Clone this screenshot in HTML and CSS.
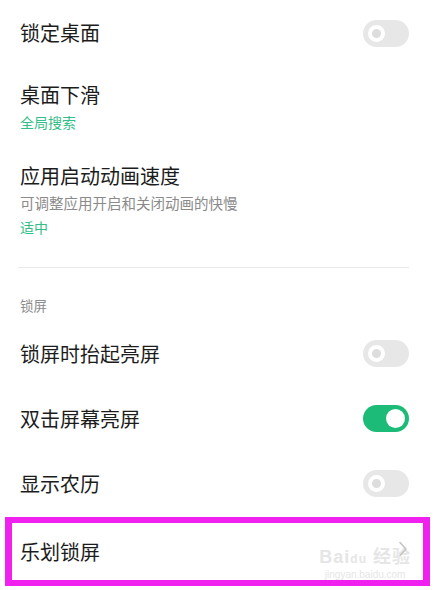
FILE: index.html
```html
<!DOCTYPE html>
<html>
<head>
<meta http-equiv="Content-Type" content="text/html; charset=utf-8"/>
<title>桌面与锁屏设置</title>
<link rel="stylesheet" href="styles.css">
</head>
<body>
<div class="list">

  <div class="item">
    <div class="title">锁定桌面</div>
    <span class="switch"></span>
  </div>

  <div class="item item-multi first-multi">
    <div class="text">
      <div class="title">桌面下滑</div>
      <div class="value">全局搜索</div>
    </div>
  </div>

  <div class="item item-multi">
    <div class="text">
      <div class="title">应用启动动画速度</div>
      <div class="desc">可调整应用开启和关闭动画的快慢</div>
      <div class="value">适中</div>
    </div>
  </div>

  <div class="divider"></div>

  <div class="section">锁屏</div>

  <div class="item">
    <div class="title">锁屏时抬起亮屏</div>
    <span class="switch"></span>
  </div>

  <div class="item">
    <div class="title">双击屏幕亮屏</div>
    <span class="switch on"></span>
  </div>

  <div class="item">
    <div class="title">显示农历</div>
    <span class="switch"></span>
  </div>

  <div class="item highlight">
    <div class="title">乐划锁屏</div>
    <div class="watermark">
      <div class="wm-logo">Bai<span class="wm-du">du</span> 经验</div>
      <div class="wm-url">jingyan.baidu.com</div>
    </div>
    <svg class="chevron" width="10" height="16" viewBox="0 0 10 16">
      <path d="M2 1.5 L8 8 L2 14.5" fill="none" stroke="#c4c4c4" stroke-width="1.6" stroke-linecap="round" stroke-linejoin="round"/>
    </svg>
  </div>

</div>
</body>
</html>
```

FILE: styles.css
```css
body {
  margin: 0;
  background-color: white;
  font-family: "Noto Sans CJK SC", "Noto Sans", sans-serif;
  color: #1c1c1c;
}

.list {
  width: 436px;
  height: 590px;
  overflow: hidden;
}

.item {
  display: flex;
  align-items: center;
  justify-content: space-between;
  height: 65px;
  padding: 0 27px 0 20px;
}

.item:first-child {
  height: 66px;
}

.title {
  font-size: 20px;
  line-height: 26px;
}

.item-multi {
  height: auto;
  padding-top: 16px;
  padding-bottom: 30px;
}

.first-multi {
  padding-bottom: 15px;
}

.desc {
  font-size: 14.5px;
  line-height: 20px;
  margin-top: 4px;
  color: #8a8a8a;
}

.value {
  font-size: 14px;
  line-height: 20px;
  margin-top: 4px;
  color: #34bd88;
}

.divider {
  height: 1px;
  margin: 0 27px 0 18px;
  background-color: #e9e9e9;
}

.section {
  font-size: 13.5px;
  line-height: 20px;
  color: #8c8c8c;
  padding-left: 20px;
  margin-top: 27px;
  margin-bottom: 6px;
}

/* switches */
.switch {
  position: relative;
  flex: none;
  width: 46px;
  height: 27px;
  border-radius: 14px;
  background-color: #e7e7e7;
}

.switch::after {
  content: "";
  position: absolute;
  left: 5px;
  top: 5px;
  width: 9px;
  height: 9px;
  border: 4px solid white;
  border-radius: 50%;
  background-color: #dddddd;
}

.switch.on {
  background-color: #1dbb78;
}

.switch.on::after {
  left: auto;
  right: 4px;
  top: 4px;
  width: 19px;
  height: 19px;
  border: none;
  background-color: white;
}

/* highlighted row */
.highlight {
  position: relative;
  height: 57px;
  margin: 1px 6px 0 5px;
  padding: 0 15px 0 8px;
  border: 7px solid #f020ee;
  border-top-width: 6px;
  border-bottom-width: 6px;
}

.chevron {
  position: relative;
  flex: none;
  margin-top: -6px;
}

.watermark {
  position: absolute;
  right: 12px;
  top: 25px;
  text-align: center;
  color: #e6e6e6;
  font-family: "Liberation Sans", sans-serif;
}

.wm-logo {
  font-size: 18px;
  font-weight: bold;
  line-height: 18px;
  letter-spacing: 1px;
  font-family: "Liberation Sans", "Noto Sans CJK SC", sans-serif;
}

.wm-du {
  font-size: 12px;
}

.wm-url {
  font-size: 10px;
  line-height: 13px;
}
```
